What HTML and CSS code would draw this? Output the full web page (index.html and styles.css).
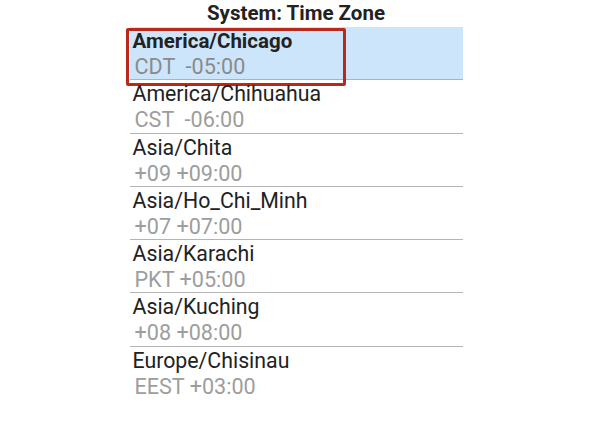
FILE: index.html
```html
<!DOCTYPE html>
<html lang="en">
<head>
    <meta charset="UTF-8">
    <title>System: Time Zone</title>
    <link rel="stylesheet" href="styles.css">
</head>
<body>
    <div class="panel">
        <h1 class="title">System: Time Zone</h1>
        <ul class="zones">
            <li class="zone selected">
                <div class="zone-name">America/Chicago</div>
                <div class="zone-offset">CDT  -05:00</div>
                <div class="focus-ring"></div>
            </li>
            <li class="zone">
                <div class="zone-name">America/Chihuahua</div>
                <div class="zone-offset">CST  -06:00</div>
            </li>
            <li class="zone">
                <div class="zone-name">Asia/Chita</div>
                <div class="zone-offset">+09 +09:00</div>
            </li>
            <li class="zone">
                <div class="zone-name">Asia/Ho_Chi_Minh</div>
                <div class="zone-offset">+07 +07:00</div>
            </li>
            <li class="zone">
                <div class="zone-name">Asia/Karachi</div>
                <div class="zone-offset">PKT +05:00</div>
            </li>
            <li class="zone">
                <div class="zone-name">Asia/Kuching</div>
                <div class="zone-offset">+08 +08:00</div>
            </li>
            <li class="zone last">
                <div class="zone-name">Europe/Chisinau</div>
                <div class="zone-offset">EEST +03:00</div>
            </li>
        </ul>
    </div>
</body>
</html>
```
FILE: styles.css
```css
body {
    margin: 0;
    background: #fff;
    font-family: Roboto, "Liberation Sans", sans-serif;
}

.panel {
    width: 333px;
    margin: 0 auto;
}

.title {
    margin: 0;
    height: 27px;
    font-size: 20.5px;
    font-weight: bold;
    line-height: 26px;
    text-align: center;
    color: #222;
}

.zones {
    list-style: none;
    margin: 0;
    padding: 0;
}

.zone {
    position: relative;
    box-sizing: border-box;
    height: 53.3px;
    padding: 1px 0 0 3px;
    border-bottom: 1px solid #b4b4b4;
}

.zone.last {
    border-bottom: none;
}

.zone.selected {
    background: #cde5fb;
    border-bottom-color: #a9b4bf;
}

.zone-name {
    font-size: 21.3px;
    line-height: 26px;
    color: #222;
}

.selected .zone-name {
    font-size: 20.5px;
    font-weight: bold;
}

.zone-offset {
    padding-left: 2px;
    font-size: 21.6px;
    line-height: 26px;
    color: #9d9d9d;
    white-space: pre;
}

.selected .zone-offset {
    color: #8a8a8a;
}

/* annotation box over the selected row */
.focus-ring {
    position: absolute;
    left: -4px;
    top: 1px;
    width: 214px;
    height: 52px;
    border: 3px solid #b8291c;
    border-radius: 2px;
}
```
